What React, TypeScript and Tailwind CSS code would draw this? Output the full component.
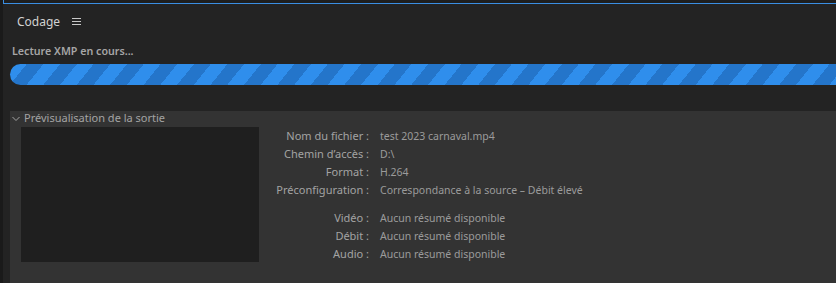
import React from "react";

const font = { fontFamily: '"Noto Sans", "Open Sans", sans-serif' };

const rows = [
  { label: "Nom du fichier :", value: "test 2023 carnaval.mp4" },
  { label: "Chemin d’accès :", value: "D:\\" },
  { label: "Format :", value: "H.264" },
  { label: "Préconfiguration :", value: "Correspondance à la source – Débit élevé" },
];

const summary = [
  { label: "Vidéo :", value: "Aucun résumé disponible" },
  { label: "Débit :", value: "Aucun résumé disponible" },
  { label: "Audio :", value: "Aucun résumé disponible" },
];

function InfoRow({ label, value }: { label: string; value: string }) {
  return (
    <>
      <div className="text-right text-[11px] text-[#a3a3a3] h-[18px] leading-[18px] whitespace-nowrap">{label}</div>
      <div className="text-[10.5px] text-[#9b9b9b] h-[18px] leading-[18px] whitespace-nowrap">{value}</div>
    </>
  );
}

export default function App() {
  return (
    <div className="w-[836px] h-[283px] bg-[#1a1a1a] flex flex-col overflow-hidden" style={font}>
      {/* bottom edge of the focused panel above */}
      <div className="h-[4px] ml-[3px] bg-[#1e1e1e] border-l border-b border-[#3a8ee2]" />

      <div className="flex-1 ml-[3px] bg-[#232323] flex flex-col">
        {/* panel tab */}
        <div className="h-[36px] flex items-center pl-[14px] gap-[12px]">
          <span className="text-[12px] text-[#d2d2d2]">Codage</span>
          <svg width="9" height="8" viewBox="0 0 9 8" className="text-[#c8c8c8]">
            <path d="M0 0.5h9M0 3.5h9M0 6.5h9" stroke="currentColor" strokeWidth="1" />
          </svg>
        </div>

        <div className="pl-[9px] pt-[3px] h-[24px] text-[10.7px] leading-[16px] font-semibold text-[#a6a6a6]">
          Lecture XMP en cours...
        </div>

        {/* striped progress bar */}
        <div className="ml-[7px] h-[21px] rounded-l-full bg-[repeating-linear-gradient(129deg,#2f8eec_0px,#2f8eec_13px,#2475ca_13px,#2475ca_26px)]" />

        {/* output preview section */}
        <div className="mt-[26px] ml-[7px] flex-1 bg-[#333333] flex flex-col">
          <div className="h-[15px] flex items-center pl-[2px] gap-[4px] text-[11px] text-[#a3a3a3]">
            <svg width="8" height="6" viewBox="0 0 8 6" className="text-[#a3a3a3]">
              <path d="M0.5 1l3.5 3.5L7.5 1" fill="none" stroke="currentColor" strokeWidth="1" />
            </svg>
            <span>Prévisualisation de la sortie</span>
          </div>

          <div className="flex mt-[1px]">
            <div className="ml-[11px] w-[238px] h-[135px] bg-[#1f1f1f]" />
            <div className="grid grid-cols-[110px_auto] gap-x-[11px] content-start">
              {rows.map((r) => (
                <InfoRow key={r.label} {...r} />
              ))}
              <div className="col-span-2 h-[10px]" />
              {summary.map((r) => (
                <InfoRow key={r.label} {...r} />
              ))}
            </div>
          </div>
        </div>
      </div>
    </div>
  );
}
